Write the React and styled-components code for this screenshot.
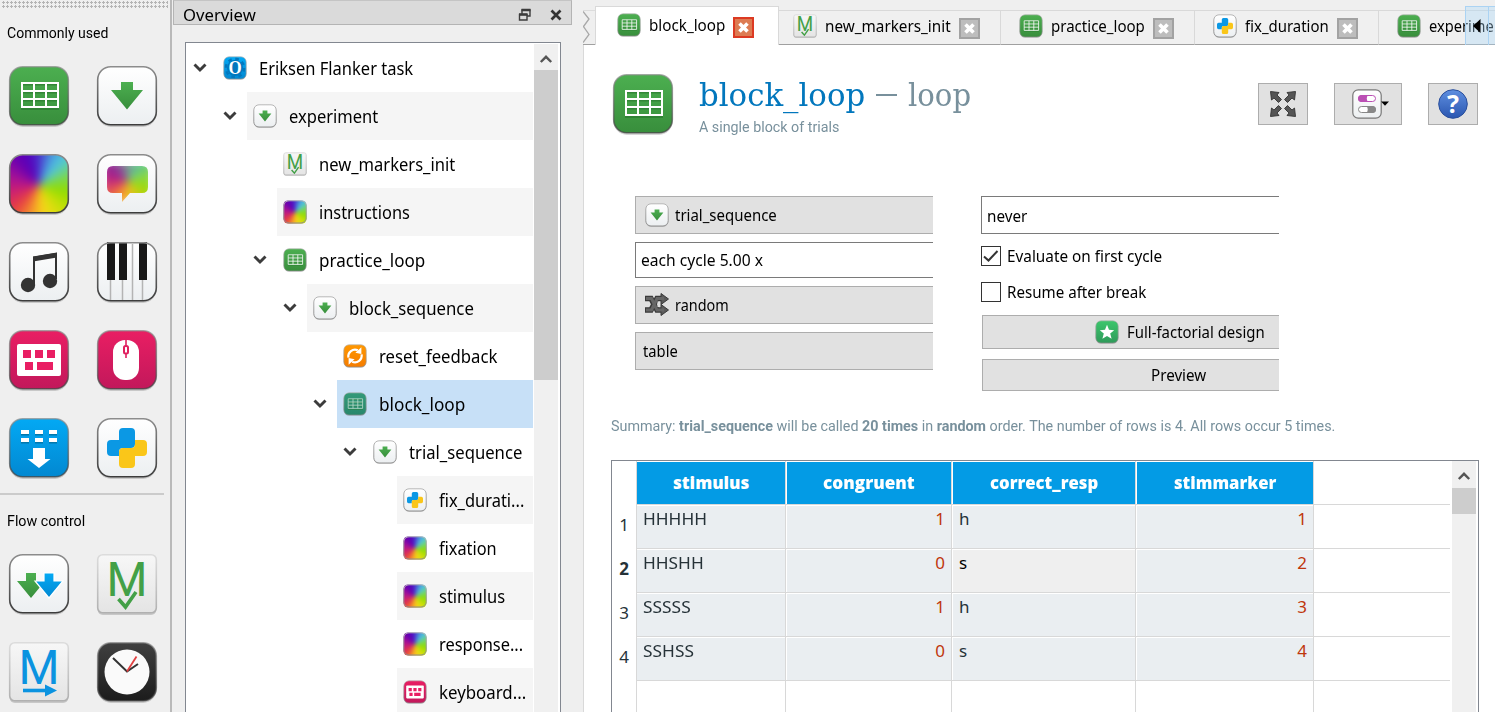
import React, { useLayoutEffect, useRef, useState } from 'react';
import styled, { createGlobalStyle, css } from 'styled-components';

const ui = '"Noto Sans", "Open Sans", sans-serif';
const condensed = 'Roboto, "Liberation Sans", sans-serif';
const slab = '"DejaVu Serif", serif';

const Global = createGlobalStyle`
  *, *::before, *::after { box-sizing: border-box; }
  html, body, #root { height: 100%; }
  body { margin: 0; overflow: hidden; background: #efefef; color: #000; font: 16px ${ui}; }
  svg { display: block; flex: none; overflow: visible; }
`;

/* ---------- text that is fitted to a given width ---------- */

const Slot = styled.span`
  display: inline-block;
  flex: none;
  width: ${p => p.$w}px;
  white-space: nowrap;
`;
const Ink = styled.span`
  display: inline-block;
  transform-origin: 0 50%;
  white-space: pre;
`;

function Fit({ w, children }) {
  const ref = useRef(null);
  const [ratio, setRatio] = useState(1);
  useLayoutEffect(() => {
    const natural = ref.current.offsetWidth;
    if (natural) setRatio(w / natural);
  }, [w, children]);
  return (
    <Slot $w={w}>
      <Ink ref={ref} style={{ transform: `scaleX(${ratio})` }}>{children}</Ink>
    </Slot>
  );
}

/* ---------- icons ---------- */

const DefsSvg = styled.svg`
  position: absolute;
  width: 0;
  height: 0;
`;
const gradients = {
  green: ['#4caf50', '#388e3c'],
  teal: ['#339a78', '#28876c'],
  white: ['#ffffff', '#eceff1'],
  pink: ['#e91e63', '#c2185b'],
  blue: ['#03a9f4', '#0288d1'],
  orange: ['#ff9800', '#f57c00'],
  grey: ['#f7f7f7', '#e4e4e4'],
  black: ['#404040', '#1c1c1c'],
  emerald: ['#3cc66c', '#2f9a5a'],
  help: ['#5f8fe0', '#2a56b0'],
  rim: ['#8c8c8c', '#3c3c3c'],
  softRim: ['#b4b4b4', '#8a8a8a'],
  paleRim: ['#dcdcdc', '#b0b0b0'],
};
const Defs = () => (
  <DefsSvg>
    <defs>
      {Object.entries(gradients).map(([id, [a, b]]) => (
        <linearGradient key={id} id={id} x1="0" y1="0" x2="0" y2="1">
          <stop offset="0" stopColor={a} />
          <stop offset="1" stopColor={b} />
        </linearGradient>
      ))}
    </defs>
  </DefsSvg>
);

const spectrum = css`
  position: relative;
  width: 100%;
  height: 100%;
  overflow: hidden;
  &::before {
    content: '';
    position: absolute;
    inset: -10px;
    filter: blur(5px);
    background: conic-gradient(from 0deg at 50% 52%, #4a30cc 0deg, #4aa0e0 24deg, #50c8dc 44deg, #7ad850 72deg,
      #90dc00 102deg, #c8e008 135deg, #f8d818 170deg, #f5a028 192deg, #e84040 225deg, #c81c78 262deg,
      #a0109a 292deg, #6a00b0 320deg, #5500bc 340deg, #4a30cc 360deg);
  }
`;
const Spectrum = styled.div`
  border-radius: 12px;
  ${spectrum}
`;
const Bubble = styled.div`
  clip-path: path('M6 0H35Q41 0 41 6V21Q41 27 35 27H23L15 36V27H6Q0 27 0 21V6Q0 0 6 0Z');
  ${spectrum}
  &::before {
    inset: -6px -6px 0;
    background: conic-gradient(from 0deg at 50% 50%, #7f9c90 0deg, #5cc890 40deg, #8cd840 75deg,
      #9adc08 110deg, #d8c818 150deg, #f8b828 185deg, #f08030 215deg, #e04860 250deg, #b01c88 285deg,
      #8c3098 320deg, #7f9c90 360deg);
  }
`;

function Tile({ size = 60, fill, children, r = 13 }) {
  const small = size < 40;
  const outlined = fill === 'white' || fill === 'grey';
  const stroke = fill === 'grey' ? 'paleRim' : small ? 'softRim' : 'rim';
  const inset = small ? 2 : 0.7;
  const side = 60 - inset * 2;
  return (
    <svg width={size} height={size} viewBox="0 0 60 60">
      <rect x={inset} y={inset + 1.6} width={side} height={side} rx={r} fill="#000" opacity=".16" />
      <rect x={inset} y={inset} width={side} height={side - 0.5} rx={r} fill={`url(#${fill})`} />
      {children}
      <rect x={inset} y={inset} width={side} height={side - 0.5} rx={r} fill="none" stroke={`url(#${stroke})`}
        strokeWidth={small ? 2.4 : 1.6} opacity={outlined ? 1 : 0.7} />
    </svg>
  );
}

const Loop = ({ size, selected }) => (
  <Tile size={size} fill={selected ? 'teal' : 'green'}>
    <path d="M12 18.500H50M12 26.500H50M12 34.500H50M12 43H50" stroke="#2b7a30" strokeWidth="2" opacity=".7" />
    <path d="M13 17H49V41H13ZM13 25H49M13 33H49M25 17V41M37 17V41" fill="none"
      stroke={selected ? '#b9dccf' : '#fff'} strokeWidth="2" />
  </Tile>
);
const Sequence = ({ size }) => (
  <Tile size={size} fill="white">
    <path d="M24 16H36V24H46L30 43.500L14 24H24Z" fill="url(#green)" />
  </Tile>
);
const Sketchpad = ({ size }) => (
  <Tile size={size} fill="white">
    <foreignObject x="1" y="1" width="58" height="57.500"><Spectrum /></foreignObject>
  </Tile>
);
const Feedback = () => (
  <Tile fill="white">
    <foreignObject x="10" y="12" width="41" height="37"><Bubble /></foreignObject>
  </Tile>
);
const Sampler = () => (
  <Tile fill="white">
    <path d="M25 42V15.500L47 12V37" fill="none" stroke="#333" strokeWidth="2" />
    <path d="M24 14.500L48 10.500V15.500L24 19.500Z" fill="#333" />
    <circle cx="19" cy="43" r="7.200" fill="#333" />
    <circle cx="41" cy="39" r="7.200" fill="#333" />
  </Tile>
);
const Synth = () => (
  <Tile fill="white">
    <path d="M13.500 36V58M25.500 36V58M35.500 2V58M45.500 36V58" stroke="#b4b4b4" strokeWidth="1.500" />
    <path d="M10 0H18V38H10ZM22 0H30V38H22ZM42 0H50V38H42Z" fill="#181818" />
  </Tile>
);
const Keyboard = ({ size }) => (
  <Tile size={size} fill="pink">
    <rect x="8" y="14" width="44" height="32" rx="2" fill="#fff" />
    <path d="M14 20H22V28H14ZM26 20H34V28H26ZM38 20H46V28H38ZM16 32H24V40H16ZM28 32H44V40H28Z" fill="#e91e63" />
  </Tile>
);
const Mouse = () => (
  <Tile fill="pink">
    <rect x="16" y="10" width="26" height="40" rx="12" fill="#fff" />
    <path d="M29 10V15M29 24V28" stroke="#e02060" strokeWidth="1.600" />
    <rect x="27" y="16" width="4" height="7.500" rx="1.500" fill="#fff" stroke="#e02060" strokeWidth="2" />
  </Tile>
);
const Logger = () => (
  <Tile fill="blue">
    <path d="M12 15.500H20M26 15.500H34M40 15.500H48M12 23.500H20M26 23.500H34M40 23.500H48" stroke="#0277ab" strokeWidth="4" />
    <path d="M12 14H20M26 14H34M40 14H48M12 22H20M26 22H34M40 22H48" stroke="#fff" strokeWidth="4" />
    <path d="M24 30H36V41H41.500L30 50L18.500 41H24Z" fill="#fff" />
  </Tile>
);
const Inline = ({ size }) => (
  <Tile size={size} fill="white">
    <path d="M22 14Q22 10 26 10H34Q38 10 38 14V26Q38 30 34 30H26Q22 30 22 34V38H14Q10 38 10 34V26Q10 22 14 22H22Z" fill="#0b98e4" />
    <path d="M38 22H46Q50 22 50 26V34Q50 38 46 38H38V46Q38 50 34 50H26Q22 50 22 46V34Q22 30 26 30H34Q38 30 38 26Z" fill="#fac619" />
  </Tile>
);
const Coroutines = () => (
  <Tile fill="white">
    <path d="M17 19H27V27H36L22 44L8 27H17Z" fill="url(#green)" />
    <path d="M35 19H45V27H54L40 44L26 27H35Z" fill="url(#blue)" stroke="#fff" strokeWidth="1.200" />
  </Tile>
);
const MarkText = styled.text`
  font-family: ${condensed};
  font-size: 49px;
`;
const Letter = ({ color }) => (
  <MarkText x="9.500" y="42" fill={color} textLength="41" lengthAdjust="spacingAndGlyphs">M</MarkText>
);
const MarkersInit = ({ size }) => (
  <Tile size={size} fill="grey" r={5}>
    <Letter color="#43a047" />
    <path d="M21.500 45L28.500 53L39 38" fill="none" stroke="#43a047" strokeWidth="3.600" />
  </Tile>
);
const MarkersSend = () => (
  <Tile fill="grey" r={5}>
    <Letter color="#0b93e0" />
    <path d="M14 48.500H38" stroke="#0b93e0" strokeWidth="3.600" />
    <path d="M36 42.500L48 48.500L36 54.500Z" fill="#0b93e0" />
  </Tile>
);
const Clock = () => (
  <Tile fill="black">
    <circle cx="30" cy="30" r="22.500" fill="#fafafa" />
    <path d="M16 16L30 29.500L41 22" fill="none" stroke="#333" strokeWidth="2" />
    <path d="M30 29.500L39.500 14.500" stroke="#e04040" strokeWidth="1.800" />
  </Tile>
);
const ResetFeedback = ({ size }) => (
  <Tile size={size} fill="orange">
    <path d="M13.500 34A17 17 0 0 1 37 15.500" fill="none" stroke="#fff" strokeWidth="5.500" />
    <path d="M46 8V25L31 22Z" fill="#fff" />
    <path d="M46.500 26A17 17 0 0 1 23 44.500" fill="none" stroke="#fff" strokeWidth="5.500" />
    <path d="M14 52V35L29 38Z" fill="#fff" />
  </Tile>
);
const ZeroText = styled.text`
  font: bold 46px "Liberation Serif", serif;
`;
const OpenSesame = ({ size }) => (
  <Tile size={size} fill="blue">
    <circle cx="30" cy="30" r="20" fill="#0277bd" />
    <circle cx="30" cy="30" r="23" fill="none" stroke="#0277bd" strokeWidth="6" strokeDasharray="9 9.060" />
    <ZeroText x="30" y="45.500" fill="#fff" textAnchor="middle" textLength="33" lengthAdjust="spacingAndGlyphs">O</ZeroText>
  </Tile>
);
const StarIcon = () => (
  <Tile size={24} fill="emerald">
    <path d="M30 12L35 24.500L48 25.500L38 34L41.500 47L30 40L18.500 47L22 34L12 25.500L25 24.500Z" fill="#fff" />
  </Tile>
);
const Shuffle = () => (
  <svg width="24" height="24" viewBox="0 0 24 24">
    <path d="M0 5.500H6L12 17H18M0 17H6L12 5.500H18" fill="none" stroke="#3a3a3a" strokeWidth="5.500" />
    <path d="M16 0.500L23.500 6L16 11.500ZM16 11.500L23.500 17L16 22.500Z" fill="#5a5a5a" stroke="#3a3a3a" />
    <path d="M1 5.500H6.500L12 17H19M1 17H6.500L12 5.500H19" fill="none" stroke="#666" strokeWidth="3" />
    <path d="M13.500 8.500V14" stroke="#ddd" strokeWidth="2" />
  </svg>
);
const Expand = () => (
  <svg width="28" height="28" viewBox="0 0 28 28">
    {[0, 90, 180, 270].map(a => (
      <path key={a} transform={`rotate(${a} 14 14)`} fill="#555" stroke="#333" strokeWidth=".9" strokeLinejoin="round"
        d="M1.500 1.500L10 2.500L8 5L12.500 9.500L9.500 12.500L5 8L2.500 10Z" />
    ))}
  </svg>
);
const Toggles = () => (
  <svg width="38" height="30" viewBox="0 0 38 30">
    <rect x=".8" y=".8" width="28.400" height="28.400" rx="5.500" fill="url(#white)" stroke="#777" strokeWidth="1.200" />
    <rect x="6.500" y="6.500" width="17" height="6" rx="3" fill="#fff" stroke="#bb4fb4" />
    <path d="M9 6H16Q13.500 9.500 16 13H9Q6 12.500 6 9.500Q6 6.500 9 6Z" fill="#bb4fb4" />
    <rect x="6.500" y="17.500" width="17" height="6" rx="3" fill="#fff" stroke="#888" />
    <path d="M21 17H14.500Q17 20.500 14.500 24H21Q24 23.500 24 20.500Q24 17.500 21 17Z" fill="#888" />
    <path d="M29 12.500H37L33 16.800Z" fill="#000" />
  </svg>
);
const HelpText = styled.text`
  font: bold 25px ${ui};
`;
const Help = () => (
  <svg width="30" height="30" viewBox="0 0 30 30">
    <circle cx="15" cy="15" r="14.300" fill="url(#help)" stroke="#2a4f9c" />
    <HelpText x="15" y="24.300" textAnchor="middle" fill="#fff">?</HelpText>
  </svg>
);
const Chevron = () => (
  <svg width="14" height="10" viewBox="0 0 14 10">
    <path d="M1.500 1.500L7 7L12.500 1.500" fill="none" stroke="#3c3c3c" strokeWidth="2.900" />
  </svg>
);
const ScrollArrow = () => (
  <svg width="12" height="8" viewBox="0 0 12 8">
    <path d="M.8 7L6 1.800L11.200 7" fill="none" stroke="#555" strokeWidth="2.400" />
  </svg>
);

/* ---------- window ---------- */

const Window = styled.div`
  display: flex;
  width: 1495px;
  height: 712px;
  overflow: hidden;
  background: #efefef;
`;

/* ---------- item toolbar ---------- */

const Toolbar = styled.aside`
  flex: none;
  width: 172px;
  border-right: 2px solid #b9b9b9;
`;
const Handle = styled.div`
  height: 9px;
  margin: 0 2px;
  background: radial-gradient(circle at 1.5px 1.5px, #b4b4b4 1px, transparent 1.3px) 0 1px / 4px 4px;
`;
const Group = styled.section`
  width: 164px;
  font: 15px/20px ${condensed};
  border-bottom: 2px solid #cbcbcb;
`;
const GroupTitle = styled.div`
  padding: ${p => p.$top}px 0 0 7px;
  height: ${p => p.$top + 20}px;
`;
const IconGrid = styled.div`
  display: grid;
  grid-template-columns: 60px 60px;
  gap: 28px;
  padding: ${p => p.$top}px 0 15px 9px;
`;

/* ---------- overview dock ---------- */

const Dock = styled.section`
  display: flex;
  flex-direction: column;
  flex: none;
  width: 411px;
`;
const DockTitle = styled.header`
  display: flex;
  align-items: center;
  width: 399px;
  height: 25px;
  margin-left: 1px;
  padding: 4px 8px 0 9px;
  border: 1px solid #b4b4b4;
  border-top-color: #c4c4c4;
  background: #dadada;
  line-height: 20px;
  svg { margin-left: 17px; }
`;
const Spacer = styled.div`
  flex: 1;
`;
const TreeBox = styled.div`
  display: flex;
  flex: 1;
  width: 376px;
  min-height: 0;
  margin: 17px 0 0 13px;
  padding: 1px 1px 0 0;
  border: 1px solid #828790;
  border-bottom: 0;
  background: #fff;
  overflow: hidden;
`;
const Tree = styled.div`
  width: 347px;
  height: 672px;
`;
const TreeRow = styled.div`
  display: flex;
  height: 48px;
  padding-left: ${p => p.$level * 30}px;
  font-size: 18px;
  line-height: 25px;
`;
const Branch = styled.div`
  display: flex;
  align-items: center;
  width: 31px;
  padding-left: 7px;
`;
const Item = styled.div`
  display: flex;
  flex: 1;
  align-items: center;
  gap: 12px;
  padding-left: 6px;
  background: ${p => (p.$selected ? '#c7e0f7' : p.$shade ? '#f5f5f5' : '#fff')};
`;
const Scrollbar = styled.div`
  display: flex;
  flex-direction: column;
  width: 24px;
  margin-left: ${p => p.$gap}px;
  background: #f0f0f0;
`;
const ScrollButton = styled.div`
  display: flex;
  align-items: center;
  justify-content: center;
  height: ${p => p.$h}px;
  padding-top: 3px;
`;
const Thumb = styled.div`
  height: ${p => p.$h}px;
  background: #cdcdcd;
`;

/* ---------- tabs ---------- */

const Main = styled.main`
  display: flex;
  flex-direction: column;
  flex: 1;
  min-width: 0;
`;
const TabBar = styled.nav`
  position: relative;
  display: flex;
  align-items: flex-end;
  height: 45px;
  overflow: hidden;
`;
const TornTab = styled.div`
  flex: none;
  width: 12px;
  height: 35px;
  border-top: 1px solid #dcdcdc;
  border-bottom: 1px solid #a0a0a0;
`;
const Tab = styled.div`
  display: flex;
  flex: none;
  align-items: center;
  gap: 8px;
  width: ${p => p.$w}px;
  height: ${p => (p.$active ? 39 : 35)}px;
  padding: 0 0 ${p => (p.$active ? 2 : 3)}px ${p => p.$pad}px;
  border: 1px solid #d9d9d9;
  border-left-width: ${p => (p.$active ? 1 : 0)}px;
  border-bottom: ${p => (p.$active ? '0' : '1px solid #a0a0a0')};
  background: ${p => (p.$active ? '#fff' : '#f0f0f0')};
`;
const TabLabel = styled.span`
  height: 22px;
  line-height: 22px;
`;
const CloseButton = styled.span`
  display: flex;
  align-items: center;
  justify-content: center;
  width: 21px;
  height: 21px;
  margin-top: 5px;
  border: 2px solid ${p => (p.$active ? '#dc3a22' : '#a2a2a2')};
  background: ${p => (p.$active ? '#dd7b52' : '#bdbdbd')};
`;
const TabScroll = styled.div`
  position: absolute;
  top: 6px;
  right: 0;
  display: flex;
  width: 30px;
  height: 39px;
`;
const ScrollHalf = styled.div`
  display: flex;
  align-items: center;
  justify-content: center;
  width: ${p => p.$w}px;
  border: 1px solid #abd3f3;
  border-width: 1px 0 0 1px;
  background: rgba(170, 215, 250, .36);
`;

/* ---------- loop editor ---------- */

const Page = styled.div`
  flex: 1;
  min-height: 0;
  border-left: 1px solid #d9d9d9;
  background: #fff;
  overflow: hidden;
`;
const PageHeader = styled.header`
  display: flex;
  height: 151px;
  padding: 29px 17px 0 29px;
`;
const Heading = styled.div`
  padding-left: 26px;
  color: #78909c;
`;
const Title = styled.h1`
  display: flex;
  gap: 11px;
  margin: 0;
  height: 43px;
  font: 400 31px/42px ${slab};
`;
const Accent = styled.span`
  color: #0277bd;
`;
const Dash = styled.span`
  width: 21px;
  height: 2px;
  margin: 20px 0 0 0;
  background: #78909c;
`;
const Subtitle = styled.div`
  font: 15px/20px ${condensed};
`;
const Actions = styled.div`
  display: flex;
  gap: 26px;
  padding-top: 9px;
`;
const ActionButton = styled.button`
  display: flex;
  align-items: center;
  justify-content: center;
  width: ${p => p.$w || 50}px;
  height: 42px;
  padding: 0 0 0 ${p => p.$shift || 0}px;
  border: 1px solid #adadad;
  background: #e1e1e1;
`;
const Form = styled.div`
  display: flex;
  gap: 48px;
  height: 219px;
  padding-left: 51px;
`;
const Column = styled.div`
  width: 298px;
`;
const Field = styled.div`
  display: flex;
  align-items: center;
  gap: ${p => p.$gap || 6}px;
  height: ${p => p.$h}px;
  margin: 0 0 ${p => p.$mb || 8}px ${p => p.$ml || 0}px;
  padding: ${p => p.$pt || 0}px 0 0 ${p => p.$pad}px;
  border: 1px solid ${p => (p.$edit ? '#7a7a7a' : '#adadad')};
  border-right: 0;
  background: ${p => (p.$edit ? '#fff' : '#e1e1e1')};
`;
const CheckRow = styled.label`
  display: flex;
  align-items: center;
  gap: 6px;
  height: 20px;
  margin-bottom: ${p => p.$mb}px;
`;
const CheckBox = styled.span`
  display: flex;
  align-items: center;
  justify-content: center;
  width: 20px;
  height: 20px;
  border: 1px solid #333;
`;
const Summary = styled.div`
  height: 45px;
  padding-left: 27px;
  color: #78909c;
  font: 15px/22px ${condensed};
  b { font-weight: 700; }
`;
const TableBox = styled.div`
  display: flex;
  width: 868px;
  height: 260px;
  margin-left: 27px;
  border: 1px solid #828790;
`;
const Grid = styled.div`
  width: 838px;
`;
const GridRow = styled.div`
  display: grid;
  grid-template-columns: 25px 149px 166px 184px 178px 136px;
  height: 44px;
`;
const RowNumber = styled.div`
  padding: 8px 7px 0 0;
  border-right: 1px solid #d8d8d8;
  color: #263238;
  font-size: 17px;
  font-weight: ${p => (p.$current ? 700 : 400)};
  line-height: 24px;
  text-align: right;
`;
const Cell = styled.div`
  padding: 3px 6px 0 ${p => (p.$lead || 7)}px;
  border: 1px solid #d8d8d8;
  border-width: 0 1px 1px 0;
  background: ${p => (p.$current ? '#efefef' : p.$filled ? '#eaeef1' : '#fff')};
  box-shadow: inset ${p => (p.$lead ? 0 : 1)}px 1px #fff;
  color: ${p => (p.$number ? '#bf360c' : p.$current ? '#000' : '#263238')};
  font-size: 17px;
  line-height: 22px;
  text-align: ${p => (p.$number ? 'right' : 'left')};
`;
const HeadCell = styled.div`
  display: flex;
  align-items: center;
  justify-content: center;
  border: 1px solid #d8d8d8;
  border-width: 0 1px 1px 0;
  background: #039be5;
  box-shadow: inset ${p => (p.$first ? 0 : 1)}px 1px #fff;
  color: #fff;
  font: 800 17px/22px "Open Sans", "Noto Sans", sans-serif;
`;
const Blank = styled.div`
  border-bottom: 1px solid #d8d8d8;
`;

/* ---------- data ---------- */

const commonItems = [Loop, Sequence, Sketchpad, Feedback, Sampler, Synth, Keyboard, Mouse, Logger, Inline];
const flowItems = [Coroutines, MarkersInit, MarkersSend, Clock];

const tree = [
  ['Eriksen Flanker task', 0, OpenSesame, 154, true],
  ['experiment', 1, Sequence, 89, true],
  ['new_markers_init', 2, MarkersInit, 136],
  ['instructions', 2, Sketchpad, 91],
  ['practice_loop', 2, Loop, 106, true],
  ['block_sequence', 3, Sequence, 125, true],
  ['reset_feedback', 4, ResetFeedback, 118],
  ['block_loop', 4, Loop, 86, true],
  ['trial_sequence', 5, Sequence, 113, true],
  ['fix_durati...', 6, Inline, 85],
  ['fixation', 6, Sketchpad, 58],
  ['stimulus', 6, Sketchpad, 66],
  ['response...', 6, Sketchpad, 84],
  ['keyboard...', 6, Keyboard, 87],
];

const tabs = [
  { name: 'block_loop', icon: Loop, text: 76, w: 184, pad: 21, active: true },
  { name: 'new_markers_init', icon: MarkersInit, text: 126, w: 222, pad: 14 },
  { name: 'practice_loop', icon: Loop, text: 94, w: 194, pad: 18 },
  { name: 'fix_duration', icon: Inline, text: 84, w: 184, pad: 18 },
  { name: 'experime', icon: Loop, text: 65, w: 220, pad: 18 },
];

const columns = [['stimulus', 76], ['congruent', 92], ['correct_resp', 108], ['stimmarker', 102]];
const rows = [
  ['HHHHH', 64, '1', 'h', '1'],
  ['HHSHH', 61, '0', 's', '2'],
  ['SSSSS', 48, '1', 'h', '3'],
  ['SSHSS', 51, '0', 's', '4'],
];

export default function App() {
  return (
    <Window>
      <Global />
      <Defs />
      <Toolbar>
        <Handle />
        <Group>
          <GroupTitle $top={14}><Fit w={101}>Commonly used</Fit></GroupTitle>
          <IconGrid $top={23}>{commonItems.map((Icon, i) => <Icon key={i} />)}</IconGrid>
        </Group>
        <Group>
          <GroupTitle $top={16}><Fit w={78}>Flow control</Fit></GroupTitle>
          <IconGrid $top={23}>{flowItems.map((Icon, i) => <Icon key={i} />)}</IconGrid>
        </Group>
      </Toolbar>

      <Dock>
        <DockTitle>
          <Fit w={73}>Overview</Fit>
          <Spacer />
          <svg width="14" height="14" viewBox="0 0 14 14">
            <path d="M4 6V2H12V8H9M1.500 6.500H9V12H1.500Z" fill="none" stroke="#3c3c3c" strokeWidth="1.400" />
            <path d="M3.500 2H12.500M1 6.500H9.500" stroke="#3c3c3c" strokeWidth="2.500" />
          </svg>
          <svg width="14" height="14" viewBox="0 0 14 14">
            <path d="M2.500 2.500L11.500 11.500M11.500 2.500L2.500 11.500" stroke="#333" strokeWidth="2.700" />
          </svg>
        </DockTitle>
        <TreeBox>
          <Tree>
            {tree.map(([name, level, Icon, w, open], i) => (
              <TreeRow key={name} $level={level}>
                <Branch>{open && <Chevron />}</Branch>
                <Item $shade={i % 2 === 1} $selected={name === 'block_loop'}>
                  <Icon size={24} selected={name === 'block_loop'} />
                  <Fit w={w}>{name}</Fit>
                </Item>
              </TreeRow>
            ))}
          </Tree>
          <Scrollbar $gap={1}>
            <ScrollButton $h={26}><ScrollArrow /></ScrollButton>
            <Thumb $h={310} />
          </Scrollbar>
        </TreeBox>
      </Dock>

      <Main>
        <TabBar>
          <TornTab>
            <svg width="8" height="33" viewBox="0 0 8 33">
              <path d="M0 0.500L6 8L0.500 15.500L6 23.500L0 31.500" fill="none" stroke="#a8a8a8" strokeWidth="1.300" />
            </svg>
          </TornTab>
          {tabs.map(({ name, icon: Icon, text, w, pad, active }) => (
            <Tab key={name} $w={w} $pad={pad} $active={active}>
              <Icon size={24} />
              <TabLabel><Fit w={text}>{name}</Fit></TabLabel>
              {name !== 'experime' && (
                <CloseButton $active={active}>
                  <svg width="13" height="13" viewBox="0 0 13 13">
                    <path d="M2.500 2.500L10.500 10.500M10.500 2.500L2.500 10.500" stroke="#fff" strokeWidth="3.600" />
                  </svg>
                </CloseButton>
              )}
            </Tab>
          ))}
          <TabScroll>
            <ScrollHalf $w={23}>
              <svg width="8" height="14" viewBox="0 0 8 14"><path d="M7.500 0V14L0 7Z" /></svg>
            </ScrollHalf>
            <ScrollHalf $w={7} />
          </TabScroll>
        </TabBar>

        <Page>
          <PageHeader>
            <Loop />
            <Heading>
              <Title>
                <Accent><Fit w={166}>block_loop</Fit></Accent>
                <Dash />
                <Fit w={63}>loop</Fit>
              </Title>
              <Subtitle><Fit w={140}>A single block of trials</Fit></Subtitle>
            </Heading>
            <Spacer />
            <Actions>
              <ActionButton><Expand /></ActionButton>
              <ActionButton $w={68} $shift={6}><Toggles /></ActionButton>
              <ActionButton><Help /></ActionButton>
            </Actions>
          </PageHeader>

          <Form>
            <Column>
              <Field $h={38} $pad={9}><Sequence size={24} /><Fit w={102}>trial_sequence</Fit></Field>
              <Field $h={36} $pad={5} $edit><Fit w={122}>each cycle 5.00 x</Fit></Field>
              <Field $h={38} $pad={9}><Shuffle /><Fit w={54}>random</Fit></Field>
              <Field $h={38} $pad={7}><Fit w={35}>table</Fit></Field>
            </Column>
            <Column>
              <Field $h={38} $pad={5} $pt={2} $mb={12} $edit><Fit w={40}>never</Fit></Field>
              <CheckRow $mb={16}>
                <CheckBox>
                  <svg width="16" height="14" viewBox="0 0 16 14">
                    <path d="M1 7.500L5.500 11.500L14.500 2" fill="none" stroke="#333" strokeWidth="2" />
                  </svg>
                </CheckBox>
                <Fit w={155}>Evaluate on first cycle</Fit>
              </CheckRow>
              <CheckRow $mb={13}><CheckBox /><Fit w={139}>Resume after break</Fit></CheckRow>
              <Field $h={34} $ml={1} $pad={112} $mb={10} $gap={8}>
                <StarIcon />
                <Fit w={138}>Full-factorial design</Fit>
              </Field>
              <Field $h={32} $ml={1} $pad={168}><Fit w={55}>Preview</Fit></Field>
            </Column>
          </Form>

          <Summary>
            <Fit w={724}>
              Summary: <b>trial_sequence</b> will be called <b>20 times</b> in <b>random</b> order. The number of rows is 4. All rows occur 5 times.
            </Fit>
          </Summary>

          <TableBox>
            <Grid>
              <GridRow>
                <RowNumber />
                {columns.map(([name, w], i) => <HeadCell key={name} $first={i === 0}><Fit w={w}>{name}</Fit></HeadCell>)}
                <Blank />
              </GridRow>
              {rows.map(([stimulus, w, congruent, resp, marker], i) => (
                <GridRow key={stimulus}>
                  <RowNumber $current={i === 1}>{i + 1}</RowNumber>
                  <Cell $filled $lead={6}><Fit w={w}>{stimulus}</Fit></Cell>
                  <Cell $filled $number>{congruent}</Cell>
                  <Cell $filled $current={i === 1}>{resp}</Cell>
                  <Cell $filled $number>{marker}</Cell>
                  <Blank />
                </GridRow>
              ))}
              <GridRow>
                <RowNumber />
                <Cell /><Cell /><Cell /><Cell /><Blank />
              </GridRow>
            </Grid>
            <Scrollbar $gap={2}>
              <ScrollButton $h={27}><ScrollArrow /></ScrollButton>
              <Thumb $h={26} />
            </Scrollbar>
          </TableBox>
        </Page>
      </Main>
    </Window>
  );
}
